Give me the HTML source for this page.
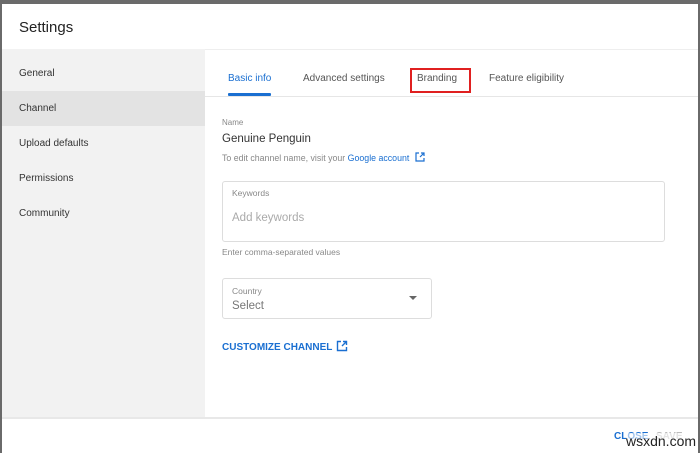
<!DOCTYPE html>
<html><head><style>
*{margin:0;padding:0;box-sizing:border-box}
body{width:700px;height:453px;position:relative;overflow:hidden;background:#fff;font-family:"Liberation Sans",sans-serif;color:#333}
.a{position:absolute;white-space:nowrap}
</style></head><body>
<div class="a" style="left:0;top:0;width:700px;height:4px;background:#6a6a6a"></div>
<div class="a" style="left:0;top:0;width:2px;height:453px;background:#6a6a6a"></div>
<div class="a" style="left:698px;top:0;width:2px;height:453px;background:#6a6a6a"></div>
<div class="a" style="left:19px;top:19px;font-size:15px;color:#222">Settings</div>
<div class="a" style="left:2px;top:49px;width:203px;height:368px;background:#f2f2f2"></div>
<div class="a" style="left:2px;top:91px;width:203px;height:35px;background:#e3e3e3"></div>
<div class="a" style="left:19px;top:68px;font-size:10px;color:#333">General</div>
<div class="a" style="left:19px;top:103px;font-size:10px;color:#333">Channel</div>
<div class="a" style="left:19px;top:138px;font-size:10px;color:#333">Upload defaults</div>
<div class="a" style="left:19px;top:173px;font-size:10px;color:#333">Permissions</div>
<div class="a" style="left:19px;top:208px;font-size:10px;color:#333">Community</div>
<div class="a" style="left:205px;top:49px;width:493px;height:1px;background:#eee"></div>
<div class="a" style="left:205px;top:96px;width:493px;height:1px;background:#e6e6e6"></div>
<div class="a" style="left:228px;top:73px;font-size:10px;color:#1a6fd1">Basic info</div>
<div class="a" style="left:228px;top:93px;width:43px;height:3px;background:#1a6fd1;border-radius:1px"></div>
<div class="a" style="left:303px;top:73px;font-size:10px;color:#555">Advanced settings</div>
<div class="a" style="left:417px;top:73px;font-size:10px;color:#555">Branding</div>
<div class="a" style="left:410px;top:68px;width:61px;height:25px;border:2px solid #e02020"></div>
<div class="a" style="left:489px;top:73px;font-size:10px;color:#555">Feature eligibility</div>
<div class="a" style="left:222px;top:118px;font-size:8px;color:#888">Name</div>
<div class="a" style="left:222px;top:133px;font-size:11.5px;color:#333">Genuine Penguin</div>
<div class="a" style="left:222px;top:153px;font-size:8.8px;color:#888">To edit channel name, visit your <span style="color:#1a6fd1">Google account</span></div>
<svg class="a" style="left:415px;top:152px" width="10" height="10" viewBox="0 0 10 10"><path d="M4 1H1v8h8V6M6 1h3v3M9 1L5 5" fill="none" stroke="#1a6fd1" stroke-width="1.2"/></svg>
<div class="a" style="left:222px;top:181px;width:443px;height:61px;border:1px solid #ddd;border-radius:3px"></div>
<div class="a" style="left:232px;top:188px;font-size:8.5px;color:#888">Keywords</div>
<div class="a" style="left:232px;top:212px;font-size:11.5px;color:#aaa">Add keywords</div>
<div class="a" style="left:222px;top:247px;font-size:8.5px;color:#888">Enter comma-separated values</div>
<div class="a" style="left:222px;top:278px;width:210px;height:41px;border:1px solid #ddd;border-radius:3px"></div>
<div class="a" style="left:232px;top:286px;font-size:8.5px;color:#888">Country</div>
<div class="a" style="left:232px;top:300px;font-size:11.5px;color:#777">Select</div>
<svg class="a" style="left:409px;top:296px" width="8" height="5"><path d="M0 0h8L4 4z" fill="#666"/></svg>
<div class="a" style="left:222px;top:342px;font-size:10px;font-weight:bold;color:#1a6fd1">CUSTOMIZE CHANNEL</div>
<svg class="a" style="left:336px;top:340px" width="12" height="12" viewBox="0 0 12 12"><path d="M5 1.5H1.5v9h9V7M7 1.5h3.5V5M10.5 1.5L6 6" fill="none" stroke="#1a6fd1" stroke-width="1.4"/></svg>
<div class="a" style="left:2px;top:417px;width:696px;height:2px;background:#e8e8e8"></div>
<div class="a" style="left:614px;top:431px;font-size:10px;font-weight:bold;color:#1a6fd1">CLOSE</div>
<div class="a" style="left:656px;top:431px;font-size:10px;font-weight:bold;color:#bbb">SAVE</div>
<div class="a" style="left:626px;top:433px;font-size:14px;color:#222;background:rgba(255,255,255,0.6)">wsxdn.com</div>
</body></html>
